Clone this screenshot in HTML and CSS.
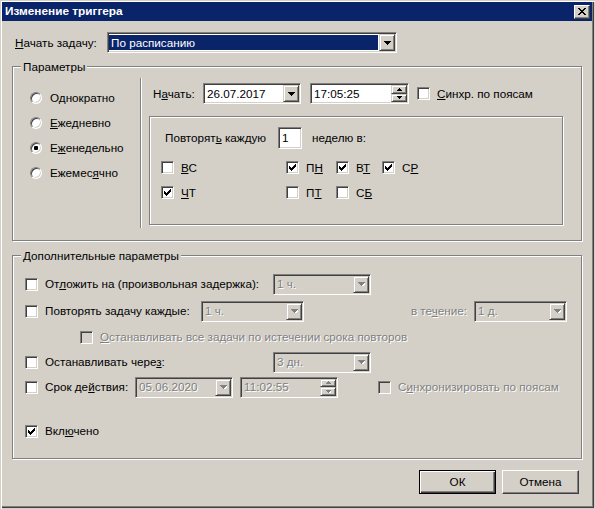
FILE: index.html
```html
<!DOCTYPE html>
<html lang="ru">
<head>
<meta charset="utf-8">
<title>Изменение триггера</title>
<link rel="stylesheet" href="styles.css">
</head>
<body>
<div class="window">
  <div class="titlebar">
    <span class="title">Изменение триггера</span>
    <span class="close-btn"><svg width="8" height="7" viewBox="0 0 8 7" shape-rendering="crispEdges"><path d="M0 0h2v1H0z M6 0h2v1H6z M1 1h2v1H1z M5 1h2v1H5z M2 2h4v1H2z M3 3h2v1H3z M2 4h4v1H2z M1 5h2v1H1z M5 5h2v1H5z M0 6h2v1H0z M6 6h2v1H6z"/></svg></span>
  </div>
  <div class="content">
    <div class="row-task">
      <span class="lbl-task"><u>Н</u>ачать задачу:</span>
      <div class="field combo-task">
        <span class="sel">По расписанию</span>
        <span class="drop"><svg width="7" height="4" viewBox="0 0 7 4" shape-rendering="crispEdges"><path d="M0 0H7V1H6V2H5V3H4V4H3V3H2V2H1V1H0Z"/></svg></span>
      </div>
    </div>

    <div class="group g1">
      <span class="legend">Параметры</span>
      <div class="radios">
        <div class="radio-row"><span class="radio"></span><span>Однократно</span></div>
        <div class="radio-row"><span class="radio"></span><span><u>Е</u>жедневно</span></div>
        <div class="radio-row"><span class="radio on"></span><span>Е<u>ж</u>енедельно</span></div>
        <div class="radio-row"><span class="radio"></span><span>Ежемес<u>я</u>чно</span></div>
      </div>
      <div class="vsep"></div>
      <div class="sched">
        <div class="start-row">
          <span class="lbl-start">Н<u>а</u>чать:</span>
          <div class="field date">
            <span class="ftext">26.07.2017</span>
            <span class="drop"><svg width="7" height="4" viewBox="0 0 7 4" shape-rendering="crispEdges"><path d="M0 0H7V1H6V2H5V3H4V4H3V3H2V2H1V1H0Z"/></svg></span>
          </div>
          <div class="field time">
            <span class="ftext">17:05:25</span>
            <span class="spin">
              <span class="spin-btn"><svg width="5" height="3" viewBox="0 0 5 3" shape-rendering="crispEdges"><path d="M2 0H3V1H4V2H5V3H0V2H1V1H2Z"/></svg></span>
              <span class="spin-btn"><svg width="5" height="3" viewBox="0 0 5 3" shape-rendering="crispEdges"><path d="M0 0H5V1H4V2H3V3H2V2H1V1H0Z"/></svg></span>
            </span>
          </div>
          <span class="cb sync-cb"></span>
          <span class="cb-label"><u>С</u>инхр. по поясам</span>
        </div>
        <div class="week-panel">
          <div class="repeat-row">
            <span class="lbl-repeat">Повторят<u>ь</u> каждую</span>
            <div class="field num"><span class="ftext">1</span></div>
            <span class="lbl-week">неделю в:</span>
          </div>
          <div class="days">
            <div class="day"><span class="cb"></span><span class="cb-label"><u>В</u>С</span></div>
            <div class="day"><span class="cb on"><svg width="7" height="7" viewBox="0 0 7 7" shape-rendering="crispEdges"><path d="M0 2h1v3H0z M1 3h1v3H1z M2 4h1v3H2z M3 3h1v3H3z M4 2h1v3H4z M5 1h1v3H5z M6 0h1v3H6z"/></svg></span><span class="cb-label">П<u>Н</u></span></div>
            <div class="day"><span class="cb on"><svg width="7" height="7" viewBox="0 0 7 7" shape-rendering="crispEdges"><path d="M0 2h1v3H0z M1 3h1v3H1z M2 4h1v3H2z M3 3h1v3H3z M4 2h1v3H4z M5 1h1v3H5z M6 0h1v3H6z"/></svg></span><span class="cb-label">В<u>Т</u></span></div>
            <div class="day"><span class="cb on"><svg width="7" height="7" viewBox="0 0 7 7" shape-rendering="crispEdges"><path d="M0 2h1v3H0z M1 3h1v3H1z M2 4h1v3H2z M3 3h1v3H3z M4 2h1v3H4z M5 1h1v3H5z M6 0h1v3H6z"/></svg></span><span class="cb-label">С<u>Р</u></span></div>
            <div class="day"><span class="cb on"><svg width="7" height="7" viewBox="0 0 7 7" shape-rendering="crispEdges"><path d="M0 2h1v3H0z M1 3h1v3H1z M2 4h1v3H2z M3 3h1v3H3z M4 2h1v3H4z M5 1h1v3H5z M6 0h1v3H6z"/></svg></span><span class="cb-label"><u>Ч</u>Т</span></div>
            <div class="day"><span class="cb"></span><span class="cb-label">П<u>Т</u></span></div>
            <div class="day"><span class="cb"></span><span class="cb-label">С<u>Б</u></span></div>
          </div>
        </div>
      </div>
    </div>

    <div class="group g2">
      <span class="legend">Дополнительные параметры</span>
      <div class="opt-row r1">
        <div class="cb-wrap w248"><span class="cb"></span><span class="cb-label">От<u>л</u>ожить на (произвольная задержка):</span></div>
        <div class="field dis w98">
          <span class="ftext gray">1 ч.</span>
          <span class="drop"><svg width="7" height="4" viewBox="0 0 7 4" shape-rendering="crispEdges"><path class="garrow" d="M0 0H7V1H6V2H5V3H4V4H3V3H2V2H1V1H0Z"/></svg></span>
        </div>
      </div>
      <div class="opt-row r2">
        <div class="cb-wrap w176"><span class="cb"></span><span class="cb-label">Повторять задачу каждые:</span></div>
        <div class="field dis w103">
          <span class="ftext gray">1 ч.</span>
          <span class="drop"><svg width="7" height="4" viewBox="0 0 7 4" shape-rendering="crispEdges"><path class="garrow" d="M0 0H7V1H6V2H5V3H4V4H3V3H2V2H1V1H0Z"/></svg></span>
        </div>
        <span class="lbl-during gray">в те<u>ч</u>ение:</span>
        <div class="field dis w93">
          <span class="ftext gray">1 д.</span>
          <span class="drop"><svg width="7" height="4" viewBox="0 0 7 4" shape-rendering="crispEdges"><path class="garrow" d="M0 0H7V1H6V2H5V3H4V4H3V3H2V2H1V1H0Z"/></svg></span>
        </div>
      </div>
      <div class="opt-row r3">
        <span class="cb dis"></span><span class="cb-label gray"><u>О</u>станавливать все задачи по истечении срока повторов</span>
      </div>
      <div class="opt-row r4">
        <div class="cb-wrap w248"><span class="cb"></span><span class="cb-label">Останавливать чере<u>з</u>:</span></div>
        <div class="field dis w98">
          <span class="ftext gray">3 дн.</span>
          <span class="drop"><svg width="7" height="4" viewBox="0 0 7 4" shape-rendering="crispEdges"><path class="garrow" d="M0 0H7V1H6V2H5V3H4V4H3V3H2V2H1V1H0Z"/></svg></span>
        </div>
      </div>
      <div class="opt-row r5">
        <div class="cb-wrap w110"><span class="cb"></span><span class="cb-label">Срок де<u>й</u>ствия:</span></div>
        <div class="field dis w98">
          <span class="ftext gray">05.06.2020</span>
          <span class="drop"><svg width="7" height="4" viewBox="0 0 7 4" shape-rendering="crispEdges"><path class="garrow" d="M0 0H7V1H6V2H5V3H4V4H3V3H2V2H1V1H0Z"/></svg></span>
        </div>
        <div class="field dis w98 time2">
          <span class="ftext gray">11:02:55</span>
          <span class="spin">
            <span class="spin-btn"><svg width="5" height="3" viewBox="0 0 5 3" shape-rendering="crispEdges"><path class="garrow" d="M2 0H3V1H4V2H5V3H0V2H1V1H2Z"/></svg></span>
            <span class="spin-btn"><svg width="5" height="3" viewBox="0 0 5 3" shape-rendering="crispEdges"><path class="garrow" d="M0 0H5V1H4V2H3V3H2V2H1V1H0Z"/></svg></span>
          </span>
        </div>
        <span class="cb dis sync2"></span><span class="cb-label gray">С<u>и</u>нхронизировать по поясам</span>
      </div>
      <div class="opt-row r6">
        <span class="cb on"><svg width="7" height="7" viewBox="0 0 7 7" shape-rendering="crispEdges"><path d="M0 2h1v3H0z M1 3h1v3H1z M2 4h1v3H2z M3 3h1v3H3z M4 2h1v3H4z M5 1h1v3H5z M6 0h1v3H6z"/></svg></span><span class="cb-label">Вкл<u>ю</u>чено</span>
      </div>
    </div>

    <div class="buttons">
      <span class="btn default">ОК</span>
      <span class="btn">Отмена</span>
    </div>
  </div>
</div>
</body>
</html>
```

FILE: styles.css
```css
* { box-sizing: border-box; margin: 0; padding: 0; }
html, body { width: 595px; height: 509px; overflow: hidden; background: #d4d0c8; }
body {
  font-family: "Liberation Sans", Arial, sans-serif;
  font-size: 11.7px;
  color: #000;
  line-height: 1;
}
u { text-decoration: underline; text-underline-offset: 1px; }

.window {
  width: 595px;
  height: 509px;
  padding: 2px 3px 0 2px;
  background: #d4d0c8;
  box-shadow: inset 1px 1px 0 #d4d0c8, inset 2px 2px 0 #fff,
              inset -1px -1px 0 #d4d0c8, inset -2px -2px 0 #404040, inset -3px -3px 0 #808080;
}

/* title bar */
.titlebar {
  height: 19px;
  background: #0a246a;
  display: flex;
  align-items: center;
  padding-left: 3px;
}
.title {
  color: #fff;
  font-weight: bold;
  font-size: 11.8px;
}
.close-btn {
  margin-left: auto;
  margin-right: 2px;
  width: 16px;
  height: 14px;
  background: #d4d0c8;
  border: 1px solid;
  border-color: #fff #404040 #404040 #fff;
  box-shadow: inset -1px -1px 0 #808080;
  display: flex;
  align-items: center;
  justify-content: center;
  padding-bottom: 1px;
}

.content { padding: 11px 10px 0 10px; }

/* generic sunken field */
.field {
  height: 21px;
  background: #fff;
  border: 1px solid;
  border-color: #808080 #fff #fff #808080;
  box-shadow: inset 1px 1px 0 #404040, inset -1px -1px 0 #d4d0c8;
  display: flex;
  align-items: stretch;
  padding: 1px;
  flex: none;
}
.field.dis { background: #d4d0c8; }
.ftext {
  flex: 1;
  display: flex;
  align-items: center;
  padding-left: 2px;
  white-space: nowrap;
  overflow: hidden;
}
.gray { color: #808080; text-shadow: 1px 1px 0 #fff; }
.garrow { fill: #808080; filter: drop-shadow(1px 1px 0 #fff); }

.drop {
  width: 16px;
  flex: none;
  background: #d4d0c8;
  border: 1px solid;
  border-color: #d4d0c8 #404040 #404040 #d4d0c8;
  box-shadow: inset 1px 1px 0 #fff, inset -1px -1px 0 #808080;
  display: flex;
  align-items: center;
  justify-content: center;
}
.spin {
  width: 16px;
  flex: none;
  display: flex;
  flex-direction: column;
}
.spin-btn {
  flex: 1;
  background: #d4d0c8;
  border: 1px solid;
  border-color: #d4d0c8 #404040 #404040 #d4d0c8;
  box-shadow: inset 1px 1px 0 #fff, inset -1px -1px 0 #808080;
  display: flex;
  align-items: center;
  justify-content: center;
}

/* row: Начать задачу */
.row-task { display: flex; align-items: center; height: 21px; }
.lbl-task { width: 95px; padding-left: 3px; flex: none; }
.combo-task { width: 290px; }
.sel {
  flex: 1;
  background: #0a246a;
  color: #fff;
  display: flex;
  align-items: center;
  padding-left: 2px;
  margin: 1px 1px 1px 0;
}

/* group boxes */
.group {
  position: relative;
  width: 570px;
  border: 1px solid #808080;
  box-shadow: inset 1px 1px 0 #fff, 1px 1px 0 #fff;
}
.legend {
  position: absolute;
  top: -7px;
  left: 8px;
  padding: 0 2px;
  background: #d4d0c8;
  line-height: 13px;
}
.g1 { margin-top: 13px; height: 175px; display: flex; }
.g2 { margin-top: 14px; height: 204px; padding: 17px 0 0 12px; }

/* radios */
.radios { width: 127px; flex: none; padding: 18px 0 0 17px; }
.radio-row { height: 25px; display: flex; align-items: center; gap: 8px; }
.radio {
  width: 12px;
  height: 12px;
  border-radius: 50%;
  background: #fff;
  border: 1px solid;
  border-color: #808080 #fff #fff #808080;
  box-shadow: inset 1px 1px 0 #404040, inset -1px -1px 0 #d4d0c8;
  display: flex;
  align-items: center;
  justify-content: center;
  flex: none;
}
.radio.on::after {
  content: "";
  width: 4px;
  height: 4px;
  border-radius: 1px;
  background: #000;
}
.vsep {
  width: 2px;
  height: 150px;
  margin-top: 11px;
  border-left: 1px solid #808080;
  border-right: 1px solid #fff;
  flex: none;
}

/* schedule area */
.sched { padding: 16px 0 0 11px; }
.start-row { display: flex; align-items: center; height: 21px; }
.lbl-start { width: 50px; flex: none; }
.date { width: 98px; }
.time { width: 99px; margin-left: 9px; }
.sync-cb { margin-left: 8px; }

/* checkbox */
.cb {
  width: 13px;
  height: 13px;
  flex: none;
  background: #fff;
  border: 1px solid;
  border-color: #808080 #fff #fff #808080;
  box-shadow: inset 1px 1px 0 #404040, inset -1px -1px 0 #d4d0c8;
  display: flex;
  align-items: center;
  justify-content: center;
}
.cb.dis { background: #d4d0c8; }
.cb-label { margin-left: 7px; white-space: nowrap; }

.week-panel {
  width: 414px;
  height: 109px;
  margin: 12px 0 0 -4px;
  border: 1px solid #808080;
  box-shadow: inset 1px 1px 0 #fff, 1px 1px 0 #fff;
}
.repeat-row { display: flex; align-items: center; height: 22px; margin: 10px 0 0 15px; }
.lbl-repeat { width: 113px; flex: none; }
.num { width: 24px; height: 22px; }
.lbl-week { margin-left: 10px; }
.days {
  display: grid;
  grid-template-columns: 125px 50px 46px auto;
  grid-auto-rows: 25px;
  margin: 6px 0 0 11px;
}
.day { display: flex; align-items: center; }

/* extra options */
.opt-row { display: flex; align-items: center; height: 22px; }
.r2 { margin-top: 5px; }
.r3 { margin-top: 4px; padding-left: 55px; }
.r4 { margin-top: 3px; }
.r5 { margin-top: 3px; }
.r6 { margin-top: 22px; }
.cb-wrap { display: flex; align-items: center; flex: none; }
.w248 { width: 248px; }
.w176 { width: 176px; }
.w110 { width: 110px; }
.w98 { width: 98px; }
.w103 { width: 103px; }
.w93 { width: 93px; }
.lbl-during { width: 170px; flex: none; text-align: right; padding-right: 7px; }
.time2 { margin-left: 7px; }
.sync2 { margin-left: 40px; }

/* buttons */
.buttons {
  margin-top: 11px;
  display: flex;
  justify-content: flex-end;
  gap: 6px;
  padding-right: 3px;
}
.btn {
  width: 77px;
  height: 24px;
  display: flex;
  align-items: center;
  justify-content: center;
  background: #d4d0c8;
  border: 1px solid;
  border-color: #fff #404040 #404040 #fff;
  box-shadow: inset -1px -1px 0 #808080;
}
.btn.default {
  border: 1px solid #000;
  box-shadow: inset 1px 1px 0 #fff, inset -1px -1px 0 #404040, inset -2px -2px 0 #808080;
}
```
